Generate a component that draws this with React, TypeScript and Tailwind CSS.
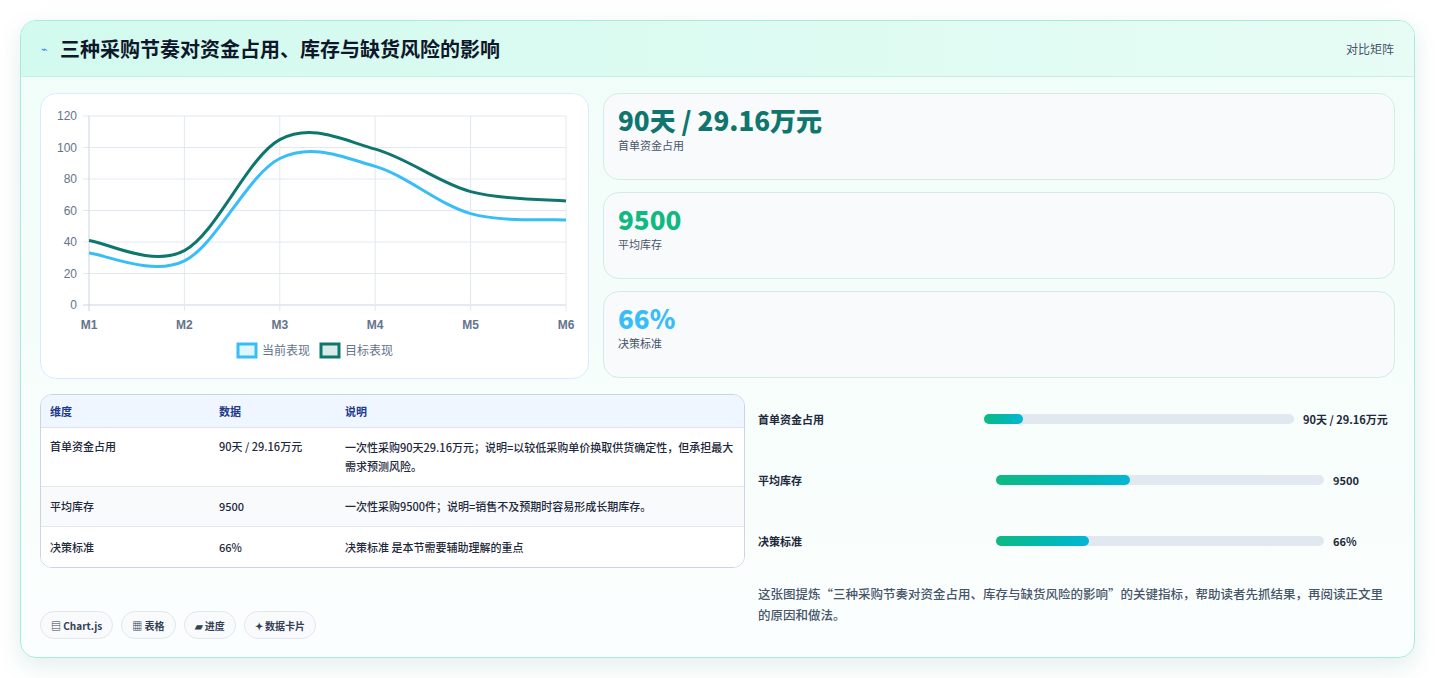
import React from "react";

const X0 = 88, X1 = 565, Y0 = 304, Y1 = 115;
const xs = [0, 1, 2, 3, 4, 5].map((i) => X0 + (i * (X1 - X0)) / 5);
const yv = (v: number) => Y0 - ((Y0 - Y1) * v) / 120;

function path(vals: number[]) {
  const p = vals.map((v, i) => [xs[i], yv(v)]);
  let d = `M${p[0][0]},${p[0][1]}`;
  for (let i = 0; i < p.length - 1; i++) {
    const p0 = p[i - 1] || p[i], p1 = p[i], p2 = p[i + 1], p3 = p[i + 2] || p2;
    const t = 0.25;
    const c1x = p1[0] + (p2[0] - p0[0]) * t * 0.67, c1y = p1[1] + (p2[1] - p0[1]) * t * 0.67;
    const c2x = p2[0] - (p3[0] - p1[0]) * t * 0.67, c2y = p2[1] - (p3[1] - p1[1]) * t * 0.67;
    d += ` C${c1x},${c1y} ${c2x},${c2y} ${p2[0]},${p2[1]}`;
  }
  return d;
}

function Chart() {
  const ticks = [0, 20, 40, 60, 80, 100, 120];
  return (
    <svg width="549" height="286" viewBox="40 93 549 286" className="block">
      {ticks.map((t) => (
        <g key={t}>
          <line x1={X0 - 6} x2={X1} y1={yv(t)} y2={yv(t)} stroke={t === 0 ? "#cbd5e1" : "#e2e8f0"} />
          <text x={X0 - 12} y={yv(t) + 4} textAnchor="end" fontSize="12" fill="#64748b" fontFamily="Liberation Sans, sans-serif">{t}</text>
        </g>
      ))}
      {xs.map((x, i) => (
        <g key={i}>
          <line x1={x} x2={x} y1={Y1} y2={Y0 + 6} stroke={i === 0 ? "#cbd5e1" : "#e2e8f0"} />
          <text x={x} y={328} textAnchor="middle" fontSize="12" fontWeight="bold" fill="#64748b" fontFamily="Liberation Sans, sans-serif">M{i + 1}</text>
        </g>
      ))}
      <path d={path([41, 34.5, 105, 99, 72, 66])} fill="none" stroke="#0f766e" strokeWidth="3" />
      <path d={path([33, 28, 93, 88, 58, 54])} fill="none" stroke="#38bdf8" strokeWidth="3" />
      <rect x="237" y="343" width="18" height="13" fill="#e0f7fe" stroke="#38bdf8" strokeWidth="3" />
      <text x="261" y="354" fontSize="12" fill="#64748b" fontFamily="Noto Sans CJK SC, sans-serif">当前表现</text>
      <rect x="320" y="343" width="18" height="13" fill="#d9ebe9" stroke="#0f766e" strokeWidth="3" />
      <text x="344" y="354" fontSize="12" fill="#64748b" fontFamily="Noto Sans CJK SC, sans-serif">目标表现</text>
    </svg>
  );
}

const stats = [
  { v: "90天 / 29.16万元", l: "首单资金占用", c: "text-[#0f766e]" },
  { v: "9500", l: "平均库存", c: "text-[#10b981]" },
  { v: "66%", l: "决策标准", c: "text-[#38bdf8]" },
];

const rows = [
  ["首单资金占用", "90天 / 29.16万元", "一次性采购90天29.16万元；说明=以较低采购单价换取供货确定性，但承担最大需求预测风险。", "h-[59px] pt-[10px]"],
  ["平均库存", "9500", "一次性采购9500件；说明=销售不及预期时容易形成长期库存。", "h-[40px] items-center"],
  ["决策标准", "66%", "决策标准 是本节需要辅助理解的重点", "h-[40px] items-center"],
];

export default function App() {
  return (
    <div className="w-[1435px] h-[678px] bg-white pt-[20px] pl-[20px]" style={{ fontFamily: "'Noto Sans CJK SC', 'Noto Sans', sans-serif" }}>
      <div className="w-[1395px] h-[638px] rounded-2xl border border-[#a7ecd9] bg-gradient-to-b from-[#f0fdf8] to-[#fbfefe] shadow-[0_8px_24px_rgba(15,118,110,0.12)] overflow-hidden">
        <div className="h-[56px] flex items-center justify-between px-[20px] bg-gradient-to-r from-[#d2faee] to-[#e6fcf5] border-b border-[#c9f0e4]">
          <div className="flex items-center gap-[12px]">
            <span className="text-[#3b82f6] text-[11px]">⌁</span>
            <span className="text-[20px] font-bold text-[#0f172a]">三种采购节奏对资金占用、库存与缺货风险的影响</span>
          </div>
          <span className="text-[12px] text-[#475569]">对比矩阵</span>
        </div>
        <div className="px-[19px] pt-[16px]">
          <div className="flex gap-[14px]">
            <div className="w-[549px] h-[286px] rounded-2xl border border-[#dbeafe] bg-white overflow-hidden">
              <Chart />
            </div>
            <div className="flex-1 flex flex-col gap-[12px]">
              {stats.map((s) => (
                <div key={s.l} className="h-[87px] rounded-2xl border border-[#d1ede6] bg-[#f8fafc] px-[14px] pt-[9px]">
                  <div className={`text-[26px] font-black leading-[34px] ${s.c}`}>{s.v}</div>
                  <div className="text-[11px] text-[#475569]">{s.l}</div>
                </div>
              ))}
            </div>
          </div>
          <div className="flex gap-[13px] mt-[15px]">
            <div className="w-[705px] flex flex-col">
              <div className="rounded-xl border border-[#cbd5e1] bg-white overflow-hidden text-[11px] text-[#1e293b] font-medium">
                <div className="h-[33px] flex items-center bg-[#eff6ff] border-b border-[#dbe3ee] font-bold text-[#1e3a8a]">
                  <div className="w-[178px] pl-[9px]">维度</div>
                  <div className="w-[126px]">数据</div>
                  <div className="flex-1">说明</div>
                </div>
                {rows.map((r, i) => (
                  <div key={i} className={`flex ${r[3]} ${i === 1 ? "bg-[#f8fafc]" : "bg-white"} ${i < 2 ? "border-b border-[#e2e8f0]" : ""}`}>
                    <div className="w-[178px] pl-[9px]">{r[0]}</div>
                    <div className="w-[126px]">{r[1]}</div>
                    <div className="flex-1 pr-[8px] leading-[19px]">{r[2]}</div>
                  </div>
                ))}
              </div>
              <div className="flex gap-[8px] mt-[43px]">
                {["▤ Chart.js", "▦ 表格", "▰ 进度", "✦ 数据卡片"].map((b) => (
                  <span key={b} className="h-[28px] px-[10px] flex items-center rounded-full border border-[#e2e8f0] bg-[#f8fafc] text-[10px] font-bold text-[#334155]">{b}</span>
                ))}
              </div>
            </div>
            <div className="flex-1 text-[11px] text-[#1e293b] font-bold">
              <div className="flex items-center h-[20px] mt-[15px]">
                <span className="w-[226px]">首单资金占用</span>
                <div className="w-[310px] h-[10px] rounded-full bg-[#e2e8f0]"><div className="h-full w-[12.5%] rounded-full bg-gradient-to-r from-[#10b981] to-[#06b6d4]" /></div>
                <span className="ml-[9px]">90天 / 29.16万元</span>
              </div>
              <div className="flex items-center h-[20px] mt-[41px]">
                <span className="w-[238px]">平均库存</span>
                <div className="w-[328px] h-[10px] rounded-full bg-[#e2e8f0]"><div className="h-full w-[41%] rounded-full bg-gradient-to-r from-[#10b981] to-[#06b6d4]" /></div>
                <span className="ml-[9px]">9500</span>
              </div>
              <div className="flex items-center h-[20px] mt-[41px]">
                <span className="w-[238px]">决策标准</span>
                <div className="w-[328px] h-[10px] rounded-full bg-[#e2e8f0]"><div className="h-full w-[28.5%] rounded-full bg-gradient-to-r from-[#10b981] to-[#06b6d4]" /></div>
                <span className="ml-[9px]">66%</span>
              </div>
              <p className="mt-[32px] text-[12.5px] leading-[21px] text-[#475569] font-medium">这张图提炼“三种采购节奏对资金占用、库存与缺货风险的影响”的关键指标，帮助读者先抓结果，再阅读正文里的原因和做法。</p>
            </div>
          </div>
        </div>
      </div>
    </div>
  );
}
